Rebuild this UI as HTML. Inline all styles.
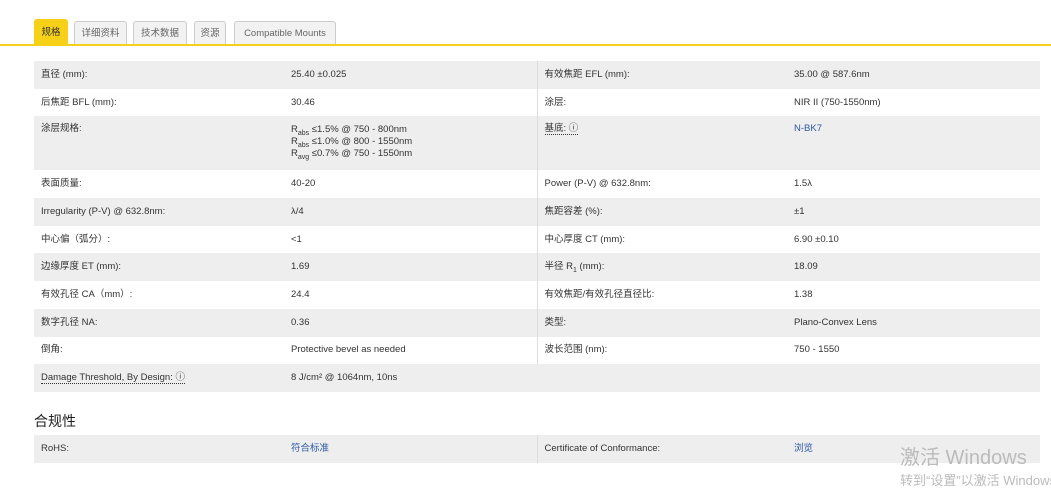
<!DOCTYPE html>
<html><head><meta charset="utf-8"><style>
*{margin:0;padding:0;box-sizing:border-box}
body{width:1051px;height:490px;background:#fff;font-family:"Liberation Sans","Noto Sans CJK SC",sans-serif;color:#333;font-size:9.5px;position:relative;overflow:hidden}
.tabs{position:absolute;left:34px;top:19px;height:26px}
.tab{position:absolute;top:2px;height:24px;border:1px solid #ccc;border-bottom:none;background:#f2f2f2;border-radius:3px 3px 0 0;color:#666;font-size:9.5px;line-height:24px;text-align:center}
.tab.a{background:#f7d117;border-color:#f7d117;color:#333;top:0;height:26px;line-height:26px}
.line{position:absolute;left:0;top:44px;width:1051px;height:2px;background:#f7d117}
table{position:absolute;left:34px;top:61px;width:1006px;border-collapse:collapse;table-layout:fixed}
td{padding:0 7px;height:27.7px;vertical-align:middle;line-height:12px;overflow:hidden}
tr:nth-child(odd) td{background:#eeeeee}
td.c2{border-right:1px solid #ddd}
td.top{vertical-align:top;padding-top:7px}
.c1{width:250px}.c2{width:253px}.c3{width:250px}
.b{color:#2a5aa8}
.u{border-bottom:1px dotted #333}
sub{font-size:7px;line-height:0}
h3{position:absolute;left:34px;top:412px;font-size:14px;font-weight:normal;color:#222;line-height:18px}
.wm{position:absolute;left:900px;top:446px;color:#bbb;font-size:20px;line-height:24px}
.wm2{position:absolute;left:900px;top:473px;color:#bbb;font-size:13px;white-space:nowrap;line-height:16px}
</style></head><body>
<div class="tabs">
<div class="tab a" style="left:0;width:34px">规格</div>
<div class="tab" style="left:40px;width:53px">详细资料</div>
<div class="tab" style="left:99px;width:54px">技术数据</div>
<div class="tab" style="left:160px;width:32px">资源</div>
<div class="tab" style="left:200px;width:102px">Compatible Mounts</div>
</div>
<div class="line"></div>
<table>
<tr><td class="c1">直径 (mm):</td><td class="c2">25.40 ±0.025</td><td class="c3">有效焦距 EFL (mm):</td><td>35.00 @ 587.6nm</td></tr>
<tr><td>后焦距 BFL (mm):</td><td class="c2">30.46</td><td>涂层:</td><td>NIR II (750-1550nm)</td></tr>
<tr><td class="top" style="height:54px">涂层规格:</td><td class="c2 top" style="line-height:12px;padding-top:8px">R<sub>abs</sub> ≤1.5% @ 750 - 800nm<br>R<sub>abs</sub> ≤1.0% @ 800 - 1550nm<br>R<sub>avg</sub> ≤0.7% @ 750 - 1550nm</td><td class="top"><span class="u">基底: ⓘ</span></td><td class="top b">N-BK7</td></tr>
<tr><td>表面质量:</td><td class="c2">40-20</td><td>Power (P-V) @ 632.8nm:</td><td>1.5λ</td></tr>
<tr><td>Irregularity (P-V) @ 632.8nm:</td><td class="c2">λ/4</td><td>焦距容差 (%):</td><td>±1</td></tr>
<tr><td>中心偏（弧分）:</td><td class="c2">&lt;1</td><td>中心厚度 CT (mm):</td><td>6.90 ±0.10</td></tr>
<tr><td>边缘厚度 ET (mm):</td><td class="c2">1.69</td><td>半径 R<sub>1</sub> (mm):</td><td>18.09</td></tr>
<tr><td>有效孔径 CA（mm）:</td><td class="c2">24.4</td><td>有效焦距/有效孔径直径比:</td><td>1.38</td></tr>
<tr><td>数字孔径 NA:</td><td class="c2">0.36</td><td>类型:</td><td>Plano-Convex Lens</td></tr>
<tr><td>倒角:</td><td class="c2">Protective bevel as needed</td><td>波长范围 (nm):</td><td>750 - 1550</td></tr>
<tr><td><span class="u">Damage Threshold, By Design: ⓘ</span></td><td>8 J/cm² @ 1064nm, 10ns</td><td></td><td></td></tr>
</table>
<h3>合规性</h3>
<table style="top:435px">
<tr><td class="c1" style="height:26px">RoHS:</td><td class="c2 b">符合标准</td><td class="c3">Certificate of Conformance:</td><td class="b">浏览</td></tr>
</table>
<div class="wm">激活 Windows</div>
<div class="wm2">转到“设置”以激活 Windows。</div>
</body></html>
